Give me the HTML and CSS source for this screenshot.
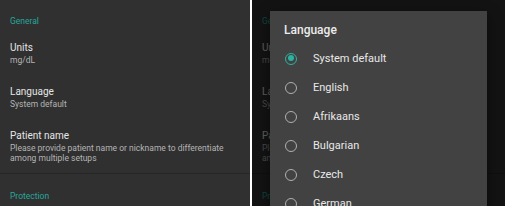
FILE: index.html
```html
<!DOCTYPE html>
<html lang="en">
<head>
    <meta charset="UTF-8">
    <meta name="viewport" content="width=device-width, initial-scale=1.0">
    <title>Settings - Language</title>
    <link rel="stylesheet" href="styles.css">
</head>
<body>
    <!-- settings screen -->
    <div class="screen">
        <div class="category">General</div>
        <div class="pref">
            <div class="pref-title">Units</div>
            <div class="pref-summary">mg/dL</div>
        </div>
        <div class="pref">
            <div class="pref-title">Language</div>
            <div class="pref-summary">System default</div>
        </div>
        <div class="pref">
            <div class="pref-title">Patient name</div>
            <div class="pref-summary">Please provide patient name or nickname to differentiate among multiple setups</div>
        </div>
        <div class="divider"></div>
        <div class="category">Protection</div>
    </div>

    <!-- same screen with language dialog open -->
    <div class="screen screen-dialog">
        <div class="category">General</div>
        <div class="pref">
            <div class="pref-title">Units</div>
            <div class="pref-summary">mg/dL</div>
        </div>
        <div class="pref">
            <div class="pref-title">Language</div>
            <div class="pref-summary">System default</div>
        </div>
        <div class="pref">
            <div class="pref-title">Patient name</div>
            <div class="pref-summary">Please provide patient name or nickname to differentiate among multiple setups</div>
        </div>
        <div class="divider"></div>
        <div class="category">Protection</div>

        <div class="scrim"></div>
        <div class="dialog">
            <div class="dialog-title">Language</div>
            <div class="choice"><span class="radio checked"></span>System default</div>
            <div class="choice"><span class="radio"></span>English</div>
            <div class="choice"><span class="radio"></span>Afrikaans</div>
            <div class="choice"><span class="radio"></span>Bulgarian</div>
            <div class="choice"><span class="radio"></span>Czech</div>
            <div class="choice"><span class="radio"></span>German</div>
        </div>
    </div>
</body>
</html>
```

FILE: styles.css
```css
/* two screenshots side by side */
body {
    margin: 0;
    height: 206px;
    overflow: hidden;
    display: flex;
    gap: 2px;
    background-color: #ffffff;
    font-family: Roboto, "Noto Sans", sans-serif;
}

.screen {
    position: relative;
    width: 250px;
    flex-shrink: 0;
    height: 206px;
    overflow: hidden;
    background-color: #303030;
}

.screen-dialog {
    width: 253px;
}

.category {
    padding: 16px 10px 5px;
    font-size: 8.5px;
    line-height: 10px;
    color: #26a69a;
}

.divider + .category {
    padding-top: 17px;
}

.pref {
    padding: 10px 10px 10px;
}

.pref-title {
    font-size: 10px;
    line-height: 14px;
    color: #e6e6e6;
}

.pref-summary {
    font-size: 8.5px;
    line-height: 10px;
    color: #b4b4b4;
}

.divider {
    height: 1px;
    background-color: #262626;
}

/* dialog */
.scrim {
    position: absolute;
    inset: 0;
    background-color: rgba(0,0,0,0.6);
}

.dialog {
    position: absolute;
    left: 18px;
    top: 11px;
    width: 217px;
    height: 220px;
    padding-top: 11px;
    box-sizing: border-box;
    background-color: #424242;
    box-shadow: 0 4px 12px rgba(0,0,0,0.5);
}

.dialog-title {
    padding-left: 14px;
    margin-bottom: 6px;
    font-size: 12px;
    font-weight: 500;
    line-height: 16px;
    color: #ececec;
}

.choice {
    display: flex;
    align-items: center;
    gap: 16px;
    height: 29px;
    padding-left: 15px;
    font-size: 11px;
    color: #e8e8e8;
}

.radio {
    position: relative;
    width: 12px;
    height: 12px;
    box-sizing: border-box;
    border: 1.5px solid #b0b0b0;
    border-radius: 50%;
}

.radio.checked {
    border-color: #2bb3a3;
}

.radio.checked::after {
    content: "";
    position: absolute;
    left: 1.5px;
    top: 1.5px;
    width: 6px;
    height: 6px;
    border-radius: 50%;
    background-color: #2bb3a3;
}
```
